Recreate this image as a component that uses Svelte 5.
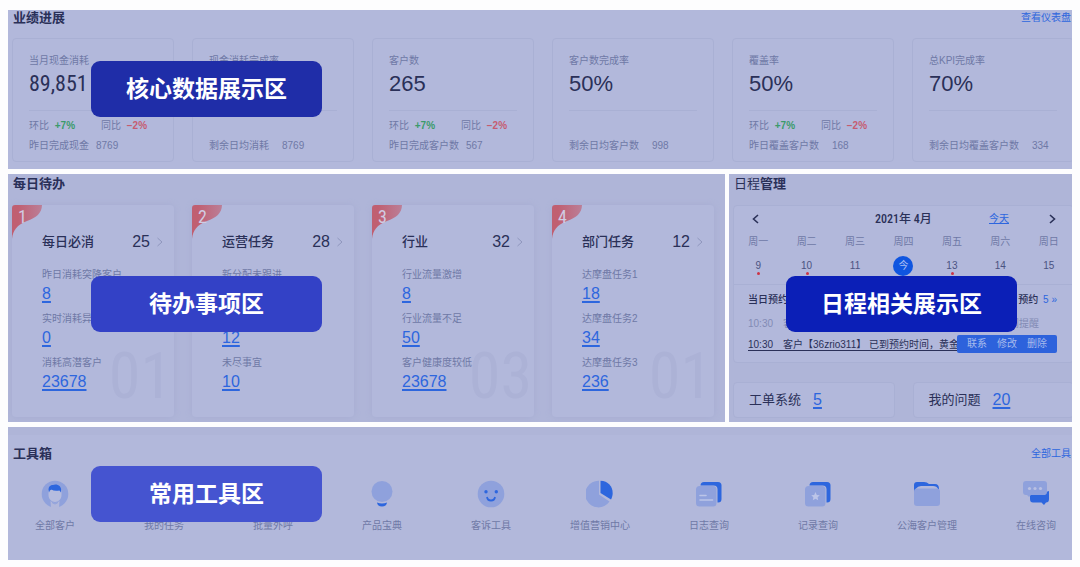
<script lang="ts">
	const stats = [
		{ label: '当月现金消耗', value: '89,851', narrow: true, trend: true, note: '昨日完成现金', count: '8769', wide: false },
		{ label: '现金消耗完成率', value: '', narrow: false, trend: false, note: '剩余日均消耗', count: '8769', wide: true },
		{ label: '客户数', value: '265', narrow: false, trend: true, note: '昨日完成客户数', count: '567', wide: false },
		{ label: '客户数完成率', value: '50%', narrow: false, trend: false, note: '剩余日均客户数', count: '998', wide: true },
		{ label: '覆盖率', value: '50%', narrow: false, trend: true, note: '昨日覆盖客户数', count: '168', wide: true },
		{ label: '总KPI完成率', value: '70%', narrow: false, trend: false, note: '剩余日均覆盖客户数', count: '334', wide: true }
	];

	const todos = [
		{
			title: '每日必消',
			total: 25,
			ghost: '01',
			items: [['昨日消耗突降客户', 8], ['实时消耗异常', 0], ['消耗高潜客户', 23678]]
		},
		{
			title: '运营任务',
			total: 28,
			ghost: '',
			items: [['新分配未跟进', ''], ['', 12], ['未尽事宜', 10]]
		},
		{
			title: '行业',
			total: 32,
			ghost: '03',
			items: [['行业流量激增', 8], ['行业流量不足', 50], ['客户健康度较低', 23678]]
		},
		{
			title: '部门任务',
			total: 12,
			ghost: '01',
			items: [['达摩盘任务1', 18], ['达摩盘任务2', 34], ['达摩盘任务3', 236]]
		}
	];

	const weekdays = ['周一', '周二', '周三', '周四', '周五', '周六', '周日'];
	const days = [
		{ text: '9', dot: true },
		{ text: '10', dot: true },
		{ text: '11' },
		{ text: '今', today: true },
		{ text: '13', dot: true },
		{ text: '14' },
		{ text: '15' }
	];

	const tools = [
		{ name: '全部客户', icon: 'user' },
		{ name: '我的任务', icon: '' },
		{ name: '批量外呼', icon: '' },
		{ name: '产品宝典', icon: 'bulb' },
		{ name: '客诉工具', icon: 'smile' },
		{ name: '增值营销中心', icon: 'pie' },
		{ name: '日志查询', icon: 'note' },
		{ name: '记录查询', icon: 'star' },
		{ name: '公海客户管理', icon: 'folder' },
		{ name: '在线咨询', icon: 'chat' }
	];
</script>

<main class="page">
	<section class="panel">
		<header class="panel-head">
			<h2>业绩进展</h2>
			<a class="more" href="#dashboard">查看仪表盘</a>
		</header>
		<div class="stats">
			{#each stats as stat}
				<article class="stat">
					<div class="stat-label">{stat.label}</div>
					<div class="stat-value" class:narrow={stat.narrow}>{stat.value}</div>
					<div class="stat-foot">
						<div class="trend">
							{#if stat.trend}
								<span>环比 <b class="up">+7%</b></span>
								<span>同比 <b class="down">−2%</b></span>
							{/if}
						</div>
						<div class="note" class:wide={stat.wide}>
							<span>{stat.note}</span>
							<span>{stat.count}</span>
						</div>
					</div>
				</article>
			{/each}
		</div>
		<div class="badge data">核心数据展示区</div>
	</section>

	<div class="middle">
		<section class="panel todo-panel">
			<header class="panel-head">
				<h2>每日待办</h2>
			</header>
			<div class="todos">
				{#each todos as todo, i}
					<article class="todo">
						<svg class="ribbon" width="30" height="34" viewBox="0 0 30 34">
							<defs>
								<linearGradient id="ribbon-{i}" x1="0" y1="0" x2="1" y2="0">
									<stop offset="0.2" stop-color="#c05f71" />
									<stop offset="1" stop-color="#bb7f98" />
								</linearGradient>
							</defs>
							<path
								d="M0 34V3Q0 0 3 0H30C30 8 24 13 15 16C5 20 1 25 0 34Z"
								fill="url(#ribbon-{i})"
							/>
						</svg>
						<span class="rank">{i + 1}</span>
						<span class="ghost">{todo.ghost}</span>
						<div class="todo-head">
							<h3>{todo.title}</h3>
							<span class="total">{todo.total}</span>
							<svg width="6" height="10" viewBox="0 0 6 10" fill="none" stroke="#8f97bd">
								<path d="M.5 1L5 5L.5 9" />
							</svg>
						</div>
						<ul>
							{#each todo.items as [label, count]}
								<li>
									<span class="todo-label">{label}</span>
									<a class="num" href="#todo">{count}</a>
								</li>
							{/each}
						</ul>
					</article>
				{/each}
			</div>
			<div class="badge todo-badge">待办事项区</div>
		</section>

		<section class="panel schedule-panel">
			<header class="panel-head">
				<h2><span class="light">日程</span>管理</h2>
			</header>
			<div class="schedule">
				<div class="month">
					<button type="button" aria-label="上一周">
						<svg width="7" height="10" viewBox="0 0 7 10" fill="none" stroke="#2b3158" stroke-width="1.6">
							<path d="M6 1L1.5 5L6 9" />
						</svg>
					</button>
					<span class="month-name">2021年 4月</span>
					<a href="#today">今天</a>
					<button type="button" aria-label="下一周">
						<svg width="7" height="10" viewBox="0 0 7 10" fill="none" stroke="#2b3158" stroke-width="1.6">
							<path d="M1 1L5.5 5L1 9" />
						</svg>
					</button>
				</div>
				<table>
					<thead>
						<tr>
							{#each weekdays as day}
								<th>{day}</th>
							{/each}
						</tr>
					</thead>
					<tbody>
						<tr>
							{#each days as day}
								<td><span class="day" class:today={day.today} class:dot={day.dot}>{day.text}</span></td>
							{/each}
						</tr>
					</tbody>
				</table>
				<div class="agenda">
					<div class="agenda-head">
						<span>当日预约</span>
						<span>次日预约 <a href="#next">5 »</a></span>
					</div>
					<div class="event muted">10:30&emsp;客户【36zrio311】 已到预约时间，黄金展位到期时间提醒</div>
					<div class="event">
						<div class="event-text">10:30&emsp;客户【36zrio311】 已到预约时间，黄金展</div>
						<div class="actions">
							<button type="button">联系</button>
							<button type="button">修改</button>
							<button type="button">删除</button>
						</div>
					</div>
				</div>
			</div>
			<div class="shortcuts">
				<div class="shortcut">工单系统 <a class="num" href="#orders">5</a></div>
				<div class="shortcut">我的问题 <a class="num" href="#issues">20</a></div>
			</div>
			<div class="badge schedule-badge">日程相关展示区</div>
		</section>
	</div>

	<section class="panel tools-panel">
		<header class="panel-head">
			<h2>工具箱</h2>
			<a class="more" href="#tools">全部工具</a>
		</header>
		<nav class="tools">
			{#each tools as tool}
				<a class="tool" href="#tool">
					<svg width="28" height="28" viewBox="0 0 28 28">
						{#if tool.icon === 'user'}
							<circle cx="14" cy="14" r="13.3" fill="#8fa1dc" />
							<path d="M7.500 10H20.500V15C20.500 19 17.500 22 14 22S7.500 19 7.500 15Z" fill="#b6bcde" />
							<path d="M9.500 21Q14 25 18.500 21L18 28H10Z" fill="#b2b8db" />
							<path d="M11 22.500Q14 25.500 17 22.500" fill="none" stroke="#8fa1dc" />
							<path d="M8 12.500C6.500 7 9 5 12 5C15 3.500 21.500 5 20 12.500L18.500 10.500Q13 11.500 10.500 9.500Q8.500 10 8 12.500Z" fill="#2d66de" />
						{:else if tool.icon === 'bulb'}
							<circle cx="14" cy="11.5" r="10.5" fill="#8fa1dc" />
							<path d="M9 22.500Q14 24.500 19 22.500Q18.500 26.500 14 26.500T9 22.500Z" fill="#2d66de" />
						{:else if tool.icon === 'smile'}
							<circle cx="14" cy="14" r="13.3" fill="#8fa1dc" />
							<circle cx="9" cy="11.7" r="1.7" fill="#2d66de" />
							<circle cx="19.3" cy="11.7" r="1.7" fill="#2d66de" />
							<path d="M10 17Q10.500 20.500 14 20.500T18 17" fill="none" stroke="#2d66de" stroke-width="1.8" />
						{:else if tool.icon === 'pie'}
							<path d="M13 .8V14.500L23.500 21.500A13.300 13.300 0 1 1 13 .8Z" fill="#8fa1dc" />
							<path d="M14.500 .8C24.500 1 29.500 11 25 19.500L14.500 13Z" fill="#2d66de" />
						{:else if tool.icon === 'note' || tool.icon === 'star'}
							<rect x="5.5" y="2" width="21" height="20.5" rx="3.5" fill="#2d66de" />
							<rect x="0" y="5.5" width="22.5" height="22" rx="4" fill="#b2b8db" />
							<rect x="1" y="6" width="20.5" height="20.5" rx="3.5" fill="#8fa1dc" />
							{#if tool.icon === 'star'}
								<path d="M11.500 12L12.800 14.900L15.800 15.200L13.600 17.300L14.200 20.300L11.500 18.800L8.800 20.300L9.400 17.300L7.200 15.200L10.200 14.900Z" fill="#bcc5e8" />
							{:else}
								<path d="M5 15.500H11M5 20H17.500" stroke="#bcc5e8" stroke-width="1.6" stroke-linecap="round" />
							{/if}
						{:else if tool.icon === 'folder'}
							<path d="M1 12V5Q1 2 4 2H11Q14 2 16 4H22Q26 4 26 9V12Z" fill="#2d66de" />
							<path d="M2.500 9Q5 6 8 6H20Q24 6 25 9L25 13H2.500Z" fill="#b2b8db" />
							<rect x="1" y="8.5" width="26" height="17.5" rx="3" fill="#8fa1dc" />
						{:else if tool.icon === 'chat'}
							<path d="M24 12L27 11V19Q27 22.500 24 22.500L22 25L19.500 22.500H11Q8 22.500 8 19V15H21Q24 15 24 12Z" fill="#2d66de" />
							<path d="M4 1H22Q25 1 25 4V12Q25 15 22 15H9L7 17L5 15H4Q1 15 1 12V4Q1 1 4 1Z" fill="#8fa1dc" />
							<circle cx="7.5" cy="8.5" r="1.6" fill="#b9c0e2" />
							<circle cx="13" cy="8.5" r="1.6" fill="#b9c0e2" />
							<circle cx="18.5" cy="8.5" r="1.6" fill="#b9c0e2" />
						{/if}
					</svg>
					<span>{tool.name}</span>
				</a>
			{/each}
		</nav>
		<div class="badge tools-badge">常用工具区</div>
	</section>
</main>

<style>
	:global(body) {
		margin: 0;
		background: #fdfdfe;
	}

	.page {
		--bg: #b2b8db;
		--bg-dim: #afb5d8;
		--line: #a9b0d4;
		--ink: #2a3058;
		--muted: #6f79a6;
		--link: #2d66de;
		--condensed: 'Roboto Condensed', 'Liberation Sans Narrow', 'Liberation Sans', 'Noto Sans CJK SC', sans-serif;
		display: flex;
		flex-direction: column;
		gap: 5px;
		padding: 10px 8px 8px;
		font-family: 'Liberation Sans', 'Noto Sans CJK SC', sans-serif;
		font-size: 10px;
		line-height: 16px;
		color: var(--muted);
	}

	h2,
	h3,
	ul {
		margin: 0;
		padding: 0;
		list-style: none;
	}

	a {
		color: var(--link);
	}

	button {
		padding: 0;
		border: 0;
		background: none;
		font: inherit;
		color: inherit;
		cursor: pointer;
	}

	.panel {
		position: relative;
		min-width: 0;
		overflow: hidden;
		background: var(--bg);
		padding: 0 0 7px 4px;
	}

	.panel-head {
		display: flex;
		justify-content: space-between;
		align-items: center;
		padding: 0 1px;
		color: var(--ink);
	}

	h2 {
		font-size: 13px;
		font-weight: 600;
		line-height: 16px;
	}

	.light {
		font-weight: 400;
	}

	.more {
		text-decoration: none;
	}

	.badge {
		position: absolute;
		left: 83px;
		width: 231px;
		border-radius: 9px;
		color: #fff;
		font-size: 23px;
		font-weight: 700;
		line-height: 56px;
		text-align: center;
	}

	.data {
		top: 51px;
		background: #1f2da8;
	}

	.todo-badge {
		top: 102px;
		background: #3341c6;
	}

	.schedule-badge {
		top: 102px;
		left: 57px;
		background: #0b1fb7;
	}

	.tools-badge {
		top: 31px;
		background: #4554d0;
	}

	.stats {
		display: grid;
		grid-template-columns: repeat(6, minmax(0, 1fr));
		gap: 18px;
		margin: 12px -2px 0 0;
	}

	.stat {
		padding: 14px 16px 5px;
		border: 1px solid var(--line);
		border-radius: 4px;
		white-space: nowrap;
	}

	.stat-value {
		height: 30px;
		font-size: 22px;
		line-height: 30px;
		color: var(--ink);
	}

	.narrow {
		font-family: var(--condensed);
	}

	.stat-foot {
		margin-top: 11px;
		padding-top: 5px;
		border-top: 1px solid var(--line);
		line-height: 20px;
	}

	.trend {
		display: grid;
		grid-template-columns: 72px 1fr;
		height: 20px;
	}

	.trend b {
		margin-left: 3px;
	}

	.up {
		color: #3b9b6b;
	}

	.down {
		color: #c55c70;
	}

	.note {
		display: flex;
		gap: 7px;
	}

	.note.wide {
		gap: 13px;
	}

	.middle {
		display: grid;
		grid-template-columns: 717fr 343fr;
		gap: 4px;
	}

	.todo-panel,
	.schedule-panel {
		padding-top: 2px;
		padding-bottom: 4px;
		background: var(--bg-dim);
	}

	.todos {
		display: grid;
		grid-template-columns: repeat(4, minmax(0, 1fr));
		gap: 18px;
		margin: 13px 11px 0 0;
	}

	.todo {
		position: relative;
		padding: 27px 11px 24px 30px;
		border-radius: 4px;
		background: var(--bg);
		box-shadow: 0 0 6px #a6acd2;
		white-space: nowrap;
	}

	.ribbon {
		position: absolute;
		top: 0;
		left: 0;
	}

	.rank {
		position: absolute;
		top: 4px;
		left: 6px;
		font-family: var(--condensed);
		font-size: 18px;
		color: #d0cce3;
	}

	.ghost {
		position: absolute;
		right: 2px;
		bottom: 8px;
		font-family: var(--condensed);
		font-size: 64px;
		line-height: 64px;
		color: #acb2d6;
	}

	.todo-head {
		display: flex;
		align-items: center;
		height: 20px;
		margin-bottom: 15px;
		color: var(--ink);
	}

	h3 {
		flex: 1;
		font-size: 13px;
		font-weight: 500;
	}

	.total {
		margin-right: 7px;
		font-size: 16px;
	}

	.todo ul {
		position: relative;
		display: flex;
		flex-direction: column;
		gap: 6px;
	}

	li {
		display: flex;
		flex-direction: column;
		align-items: flex-start;
	}

	.todo-label {
		height: 16px;
	}

	.num {
		height: 22px;
		font-size: 16px;
		line-height: 22px;
		text-decoration-thickness: 2px;
		text-underline-offset: 2px;
	}

	.schedule {
		margin: 13px -2px 0 0;
		border: 1px solid var(--line);
		border-radius: 4px;
		background: var(--bg);
	}

	.month {
		display: grid;
		grid-template-columns: 42px 1fr 42px 42px;
		align-items: center;
		height: 26px;
		color: var(--ink);
	}

	.month button {
		display: flex;
		justify-content: center;
	}

	.month-name {
		padding-left: 42px;
		font-family: var(--condensed);
		font-size: 12px;
		font-weight: 500;
		text-align: center;
	}

	table {
		width: 100%;
		table-layout: fixed;
		border-collapse: collapse;
		text-align: center;
	}

	th,
	td {
		height: 20px;
		padding: 0;
		font-weight: 400;
	}

	td {
		height: 28px;
		color: #4b5381;
	}

	.day {
		position: relative;
		display: inline-block;
		width: 20px;
		line-height: 20px;
	}

	.today {
		border-radius: 50%;
		background: #0f55e0;
		color: #a9bdf0;
	}

	.dot::after {
		content: '';
		position: absolute;
		left: 9px;
		bottom: 1px;
		width: 3px;
		height: 3px;
		border-radius: 50%;
		background: #cc3346;
	}

	.agenda {
		margin-top: 4px;
		padding: 5px 16px 5px 14px;
		border-top: 1px solid var(--line);
		white-space: nowrap;
	}

	.agenda-head {
		display: flex;
		justify-content: space-between;
		line-height: 20px;
		font-weight: 500;
		color: var(--ink);
	}

	.agenda-head a {
		margin-left: 2px;
		font-weight: 400;
		text-decoration: none;
	}

	.event {
		display: flex;
		align-items: flex-start;
		line-height: 22px;
	}

	.muted {
		padding-top: 3px;
		color: #828bb5;
	}

	.event-text {
		flex: 1;
		min-width: 0;
		overflow: hidden;
		color: var(--ink);
		line-height: 20px;
		text-decoration: underline;
		text-underline-offset: 2px;
	}

	.actions {
		display: flex;
		gap: 10px;
		height: 18px;
		margin-bottom: 4px;
		padding: 0 10px;
		border-radius: 2px;
		background: #2d62dc;
		color: #a6baec;
		line-height: 18px;
	}

	.shortcuts {
		display: grid;
		grid-template-columns: repeat(2, minmax(0, 1fr));
		gap: 18px;
		margin: 19px -2px 0 0;
	}

	.shortcut {
		display: flex;
		align-items: center;
		gap: 12px;
		height: 34px;
		padding: 0 15px;
		border: 1px solid var(--line);
		border-radius: 4px;
		background: var(--bg);
		color: var(--ink);
		font-size: 13px;
	}

	.tools-panel {
		padding-top: 11px;
		padding-bottom: 26px;
		border-top: 8px solid var(--bg-dim);
	}

	.tools {
		display: flex;
		justify-content: space-between;
		margin: 18px 0 0 7px;
	}

	.tool {
		display: flex;
		flex-direction: column;
		align-items: center;
		gap: 10px;
		width: 72px;
		color: var(--muted);
		text-decoration: none;
		white-space: nowrap;
	}
</style>
